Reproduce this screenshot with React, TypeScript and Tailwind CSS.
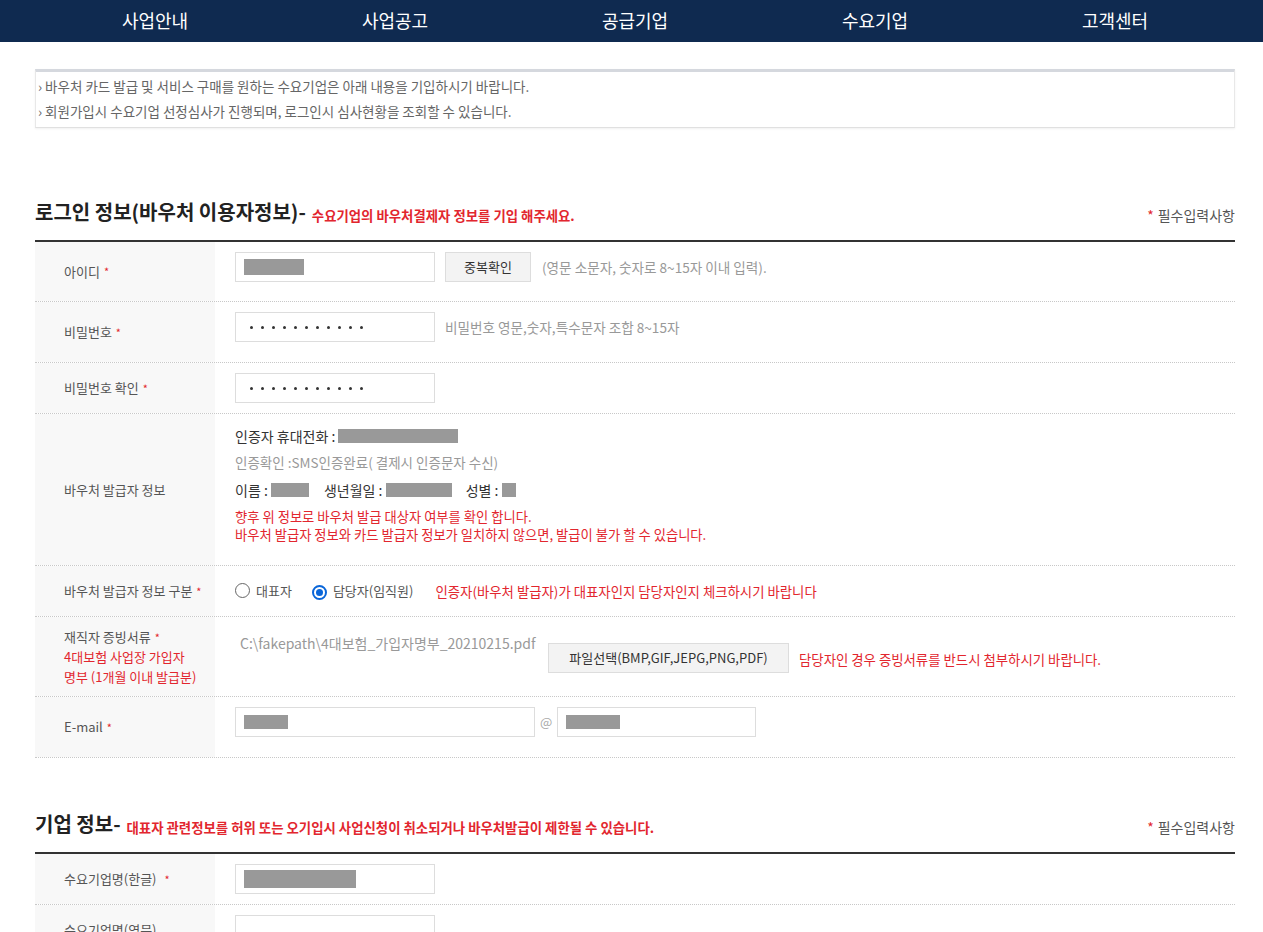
const font = { fontFamily: '"Noto Sans CJK KR", "Noto Sans", sans-serif' };

function Req() {
  return <span className="ml-1 text-[11px] text-[#e2262e]">*</span>;
}

function Mask({ w, h = 14 }: { w: number; h?: number }) {
  return <span className="inline-block bg-[#999] align-middle" style={{ width: w, height: h }} />;
}

function Input({ w = 200, children }: { w?: number; children?: React.ReactNode }) {
  return (
    <div
      className="h-[30px] border border-[#ddd] bg-white flex items-center px-2 text-[13px] text-[#333]"
      style={{ width: w }}
    >
      {children}
    </div>
  );
}

function Dots() {
  return (
    <div className="flex items-center gap-[8px] pl-[6px]">
      {Array.from({ length: 11 }).map((_, i) => (
        <span key={i} className="w-[3px] h-[3px] rounded-full bg-[#333]" />
      ))}
    </div>
  );
}

function Row({
  label,
  h,
  children,
  align = 'items-center',
}: {
  label: React.ReactNode;
  h: number;
  children: React.ReactNode;
  align?: string;
}) {
  return (
    <div className="flex border-b border-dotted border-[#c8c8c8]" style={{ minHeight: h }}>
      <div className="w-[180px] shrink-0 bg-[#f8f8f8] flex items-center pl-[29px] text-[13px] text-[#555]">
        {label}
      </div>
      <div className={`flex-1 flex pl-5 ${align}`}>{children}</div>
    </div>
  );
}

function SectionTitle({ title, note }: { title: string; note: string }) {
  return (
    <div className="flex items-end justify-between pb-[14px] border-b-2 border-[#333]">
      <div className="flex items-end">
        <span className="text-[20px] font-bold text-[#222] leading-[28px]">{title}</span>
        <span className="ml-[6px] text-[13.4px] font-bold text-[#e2262e] leading-[22px]">{note}</span>
      </div>
      <div className="text-[14px] text-[#555] leading-[22px]">
        <span className="text-[14px] text-[#e2262e] mr-1">*</span>필수입력사항
      </div>
    </div>
  );
}

function Radio({ checked }: { checked?: boolean }) {
  return (
    <span
      className={`inline-flex w-[15px] h-[15px] rounded-full items-center justify-center border ${
        checked ? 'border-[#0a66d9] border-2' : 'border-[#666]'
      }`}
    >
      {checked && <span className="w-[7px] h-[7px] rounded-full bg-[#0a66d9]" />}
    </span>
  );
}

export default function App() {
  return (
    <div className="bg-white min-h-[932px]" style={font}>
      <div className="bg-[#0f2a50] h-[42px]">
        <div className="w-[1200px] ml-[35px] grid grid-cols-5 h-full">
          {['사업안내', '사업공고', '공급기업', '수요기업', '고객센터'].map((t) => (
            <div key={t} className="flex items-center justify-center text-white text-[18px] pb-[2px]">
              {t}
            </div>
          ))}
        </div>
      </div>

      <div className="w-[1200px] ml-[35px]">
        <div className="mt-[27px] border-t-[3px] border-[#d5d8de] border-x border-b border-x-[#e8e8e8] border-b-[#e0e0e0] shadow-[0_1px_2px_rgba(0,0,0,0.06)] px-[2px] pt-[2px] pb-[3px] text-[13.5px] text-[#666]">
          <div className="leading-[25px]">› 바우처 카드 발급 및 서비스 구매를 원하는 수요기업은 아래 내용을 기입하시기 바랍니다.</div>
          <div className="leading-[25px]">› 회원가입시 수요기업 선정심사가 진행되며, 로그인시 심사현황을 조회할 수 있습니다.</div>
        </div>

        <div className="mt-[70px]">
          <SectionTitle title="로그인 정보(바우처 이용자정보)-" note="수요기업의 바우처결제자 정보를 기입 해주세요." />
        </div>

        <Row label={<>아이디<Req /></>} h={60} align="items-start pt-[10px]">
          <Input>
            <Mask w={60} h={16} />
          </Input>
          <button className="ml-[10px] h-[30px] w-[86px] border border-[#ddd] bg-[#f3f3f3] text-[13px] text-[#333]">
            중복확인
          </button>
          <span className="ml-[11px] text-[13.6px] text-[#999] leading-[30px]">(영문 소문자, 숫자로 8~15자 이내 입력).</span>
        </Row>

        <Row label={<>비밀번호<Req /></>} h={61} align="items-start pt-[10px]">
          <Input>
            <Dots />
          </Input>
          <span className="ml-[10px] text-[13.6px] text-[#999] leading-[30px]">비밀번호 영문,숫자,특수문자 조합 8~15자</span>
        </Row>

        <Row label={<>비밀번호 확인<Req /></>} h={51}>
          <Input>
            <Dots />
          </Input>
        </Row>

        <Row label="바우처 발급자 정보" h={152} align="items-start pt-[12px]">
          <div className="flex flex-col text-[14px] text-[#333]">
            <div className="leading-[20px] flex items-center">
              인증자 휴대전화 :&nbsp;
              <Mask w={120} />
            </div>
            <div className="mt-[6px] leading-[20px] text-[13.5px] text-[#999]">인증확인 :SMS인증완료( 결제시 인증문자 수신)</div>
            <div className="mt-[8px] leading-[20px] flex items-center">
              이름 :&nbsp;
              <Mask w={38} />
              <span className="ml-[15px]">생년월일 :&nbsp;</span>
              <Mask w={66} />
              <span className="ml-[14px]">성별 :&nbsp;</span>
              <Mask w={14} />
            </div>
            <div className="mt-[8px] text-[13.3px] text-[#e2262e] leading-[18px]">
              <div>향후 위 정보로 바우처 발급 대상자 여부를 확인 합니다.</div>
              <div>바우처 발급자 정보와 카드 발급자 정보가 일치하지 않으면, 발급이 불가 할 수 있습니다.</div>
            </div>
          </div>
        </Row>

        <Row label={<>바우처 발급자 정보 구분<Req /></>} h={51}>
          <div className="flex items-center text-[13px] text-[#555]">
            <Radio />
            <span className="ml-[6px]">대표자</span>
            <span className="ml-[20px]"><Radio checked /></span>
            <span className="ml-[6px]">담당자(임직원)</span>
            <span className="ml-[22px] text-[13.4px] text-[#e2262e]">인증자(바우처 발급자)가 대표자인지 담당자인지 체크하시기 바랍니다</span>
          </div>
        </Row>

        <Row
          label={
            <div className="leading-[20px]">
              <div>재직자 증빙서류<Req /></div>
              <div className="text-[#e2262e]">4대보험 사업장 가입자</div>
              <div className="text-[#e2262e]">명부 (1개월 이내 발급분)</div>
            </div>
          }
          h={80}
          align="items-start pt-[16px]"
        >
          <span className="ml-[5px] w-[298px] text-[14px] text-[#999] leading-[20px] whitespace-nowrap">C:\fakepath\4대보험_가입자명부_20210215.pdf</span>
          <button className="mt-[10px] ml-[10px] h-[30px] w-[241px] border border-[#ddd] bg-[#f3f3f3] text-[13px] text-[#333]">
            파일선택(BMP,GIF,JEPG,PNG,PDF)
          </button>
          <span className="mt-[17px] ml-[10px] text-[13.4px] text-[#e2262e] leading-[18px]">
            담당자인 경우 증빙서류를 반드시 첨부하시기 바랍니다.
          </span>
        </Row>

        <Row label={<>E-mail<Req /></>} h={61} align="items-start pt-[10px]">
          <Input w={300}>
            <Mask w={44} />
          </Input>
          <span className="mx-[5px] text-[13px] text-[#aaa] leading-[30px]">@</span>
          <Input w={199}>
            <Mask w={54} />
          </Input>
        </Row>

        <div className="mt-[52px]">
          <SectionTitle title="기업 정보-" note="대표자 관련정보를 허위 또는 오기입시 사업신청이 취소되거나 바우처발급이 제한될 수 있습니다." />
        </div>

        <Row label={<>수요기업명(한글)<span className="ml-[8px] text-[11px] text-[#e2262e]">*</span></>} h={51}>
          <Input>
            <Mask w={112} h={18} />
          </Input>
        </Row>
        <Row label="수요기업명(영문)" h={51}>
          <Input />
        </Row>
      </div>
    </div>
  );
}
